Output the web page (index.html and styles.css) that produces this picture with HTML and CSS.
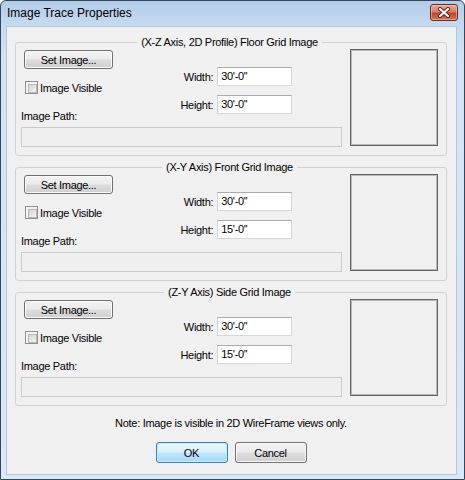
FILE: index.html
```html
<!DOCTYPE html>
<html>
<head>
<meta charset="utf-8">
<title>Image Trace Properties</title>
<link rel="stylesheet" href="styles.css">
</head>
<body>
<div class="window">
  <div class="titlebar">
    <span class="title">Image Trace Properties</span>
    <span class="close">
      <svg width="14" height="11" viewBox="0 0 14 11">
        <path d="M3 2 L11 9 M11 2 L3 9" stroke="#5a1d12" stroke-width="4" stroke-linecap="round"/>
        <path d="M3 2 L11 9 M11 2 L3 9" stroke="#ffffff" stroke-width="2.2" stroke-linecap="round"/>
      </svg>
    </span>
  </div>
  <div class="client">
    <fieldset class="group">
      <legend>(X-Z Axis, 2D Profile) Floor Grid Image</legend>
      <div class="group-body">
        <div class="left">
          <div class="top">
            <div class="actions">
              <div class="btn set">Set Image...</div>
              <div class="check"><span class="box"></span><span>Image Visible</span></div>
            </div>
            <div class="dims">
              <div class="dim"><span>Width:</span><div class="field">30'-0''</div></div>
              <div class="dim"><span>Height:</span><div class="field">30'-0''</div></div>
            </div>
          </div>
          <div class="path-label">Image Path:</div>
          <div class="path-field"></div>
        </div>
        <div class="preview"></div>
      </div>
    </fieldset>
    <fieldset class="group">
      <legend>(X-Y Axis) Front Grid Image</legend>
      <div class="group-body">
        <div class="left">
          <div class="top">
            <div class="actions">
              <div class="btn set">Set Image...</div>
              <div class="check"><span class="box"></span><span>Image Visible</span></div>
            </div>
            <div class="dims">
              <div class="dim"><span>Width:</span><div class="field">30'-0''</div></div>
              <div class="dim"><span>Height:</span><div class="field">15'-0''</div></div>
            </div>
          </div>
          <div class="path-label">Image Path:</div>
          <div class="path-field"></div>
        </div>
        <div class="preview"></div>
      </div>
    </fieldset>
    <fieldset class="group">
      <legend>(Z-Y Axis) Side Grid Image</legend>
      <div class="group-body">
        <div class="left">
          <div class="top">
            <div class="actions">
              <div class="btn set">Set Image...</div>
              <div class="check"><span class="box"></span><span>Image Visible</span></div>
            </div>
            <div class="dims">
              <div class="dim"><span>Width:</span><div class="field">30'-0''</div></div>
              <div class="dim"><span>Height:</span><div class="field">15'-0''</div></div>
            </div>
          </div>
          <div class="path-label">Image Path:</div>
          <div class="path-field"></div>
        </div>
        <div class="preview"></div>
      </div>
    </fieldset>
    <p class="note">Note: Image is visible in 2D WireFrame views only.</p>
    <div class="buttons">
      <div class="btn dlg default">OK</div>
      <div class="btn dlg">Cancel</div>
    </div>
  </div>
</div>
</body>
</html>
```
FILE: styles.css
```css
* { box-sizing: border-box; }

html, body {
  margin: 0;
  padding: 0;
}

body {
  width: 465px;
  height: 480px;
  overflow: hidden;
  font-family: "Liberation Sans", Arial, sans-serif;
  font-size: 11px;
  letter-spacing: -0.3px;
  color: #000;
}

/* window frame */
.window {
  width: 465px;
  height: 480px;
  display: flex;
  flex-direction: column;
  border: 1px solid #33465e;
  border-radius: 6px 6px 0 0;
  background: linear-gradient(to bottom, #b2cbe7 0px, #c4d9ef 22px, #d4e4f4 60px, #dbe8f5 100%);
}

.titlebar {
  height: 25px;
  flex: none;
  display: flex;
  align-items: flex-start;
  justify-content: space-between;
  padding: 0 6px 0 6px;
}

.title {
  font-size: 12px;
  letter-spacing: 0;
  line-height: 15px;
  margin-top: 5px;
}

.close {
  width: 28px;
  height: 17px;
  margin-top: 3px;
  display: flex;
  align-items: center;
  justify-content: center;
  border: 1px solid #6b2a1f;
  border-radius: 3px;
  background: linear-gradient(to bottom, #e7aa9c 0%, #d57f6b 45%, #c1452e 55%, #d2745a 100%);
  box-shadow: inset 0 0 0 1px rgba(255, 220, 210, 0.45);
}

.close svg { display: block; }

/* dialog body */
.client {
  flex: 1;
  margin: 0 7px 4px 5px;
  padding: 8px 9px 0 8px;
  background: #f0f0f0;
  border: 1px solid #b4c6d9;
}

.group {
  margin: 0 0 4px;
  padding: 0 8px 0 5px;
  height: 121px;
  min-width: 0;
  border: 1px solid #cfd2d5;
  border-radius: 3px;
}

.group legend {
  margin: 0 auto;
  padding: 0 4px;
  line-height: 14px;
}

.group-body {
  display: flex;
  gap: 8px;
}

.left { width: 322px; }

.top {
  height: 61px;
  display: flex;
  justify-content: space-between;
}

.actions { padding-left: 3px; }

.btn {
  display: flex;
  align-items: center;
  justify-content: center;
  border: 1px solid #707070;
  border-radius: 3px;
  background: linear-gradient(to bottom, #f3f3f3 0%, #ebebeb 48%, #dddddd 52%, #cfcfcf 100%);
  box-shadow: inset 0 0 0 1px #fbfbfb;
}

.btn.set {
  margin-top: 1px;
  width: 89px;
  height: 19px;
}

.check {
  display: flex;
  align-items: center;
  gap: 2px;
  height: 13px;
  margin-top: 12px;
  margin-left: 1px;
}

.box {
  width: 13px;
  height: 13px;
  border: 1px solid #8e8f8f;
  background: #f4f4f4;
  padding: 2px;
}

.box::after {
  content: "";
  display: block;
  width: 100%;
  height: 100%;
  border: 1px solid #b5b8bc;
  background: linear-gradient(135deg, #d3d3d3, #f4f4f4);
}

.dims {
  margin-right: 50px;
  padding-top: 18px;
  display: flex;
  flex-direction: column;
  gap: 9px;
}

.dim {
  display: flex;
  align-items: center;
  justify-content: flex-end;
  gap: 4px;
}

.field {
  width: 75px;
  height: 19px;
  padding-left: 3px;
  line-height: 17px;
  background: #fff;
  border: 1px solid #d3d6da;
  border-top-color: #a9abb0;
}

.path-label {
  height: 13px;
  line-height: 13px;
}

.path-field {
  margin-top: 4px;
  height: 20px;
  border: 1px solid #c8cacc;
  background: #efefef;
}

.preview {
  width: 88px;
  height: 97px;
  border: 1px solid #656565;
  box-shadow: inset 0 0 0 1px #b9b9b9;
  background: #f0f0f0;
}

.note {
  margin: 10px 0 0;
  line-height: 14px;
  text-align: center;
}

.buttons {
  margin-top: 12px;
  display: flex;
  justify-content: center;
  gap: 7px;
}

.btn.dlg {
  width: 72px;
  height: 21px;
}

.btn.default {
  border-color: #3c7fb1;
  background: linear-gradient(to bottom, #eaf6fd 0%, #d9f0fc 48%, #bee6fd 52%, #a7d9f5 100%);
  box-shadow: inset 0 0 0 1px #c6ecfd;
}
```
